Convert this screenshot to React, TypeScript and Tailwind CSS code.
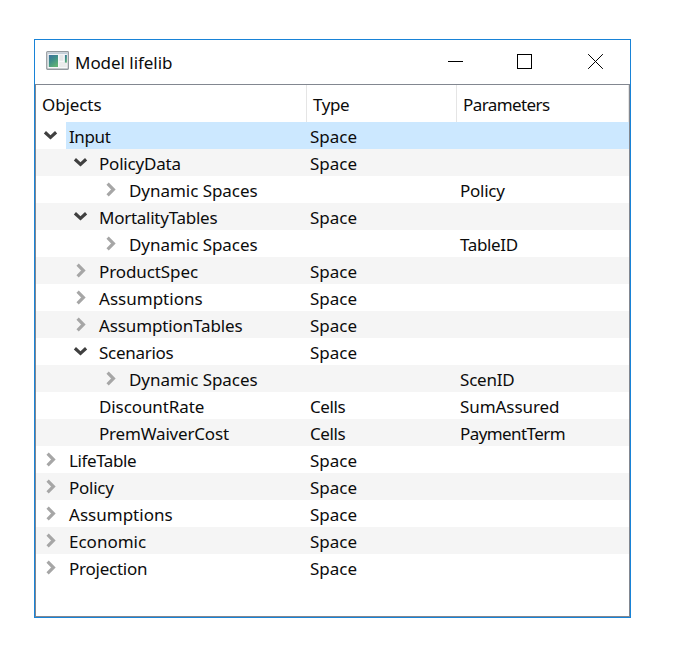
import React from "react";

type Row = {
  name: string;
  level: 0 | 1 | 2;
  state?: "open" | "closed";
  type?: string;
  params?: string;
  selected?: boolean;
};

const rows: Row[] = [
  { name: "Input", level: 0, state: "open", type: "Space", selected: true },
  { name: "PolicyData", level: 1, state: "open", type: "Space" },
  { name: "Dynamic Spaces", level: 2, state: "closed", params: "Policy" },
  { name: "MortalityTables", level: 1, state: "open", type: "Space" },
  { name: "Dynamic Spaces", level: 2, state: "closed", params: "TableID" },
  { name: "ProductSpec", level: 1, state: "closed", type: "Space" },
  { name: "Assumptions", level: 1, state: "closed", type: "Space" },
  { name: "AssumptionTables", level: 1, state: "closed", type: "Space" },
  { name: "Scenarios", level: 1, state: "open", type: "Space" },
  { name: "Dynamic Spaces", level: 2, state: "closed", params: "ScenID" },
  { name: "DiscountRate", level: 1, type: "Cells", params: "SumAssured" },
  { name: "PremWaiverCost", level: 1, type: "Cells", params: "PaymentTerm" },
  { name: "LifeTable", level: 0, state: "closed", type: "Space" },
  { name: "Policy", level: 0, state: "closed", type: "Space" },
  { name: "Assumptions", level: 0, state: "closed", type: "Space" },
  { name: "Economic", level: 0, state: "closed", type: "Space" },
  { name: "Projection", level: 0, state: "closed", type: "Space" },
];

const tracking: Record<string, string> = {
  "Model lifelib": "tracking-[-0.04px]",
  Objects: "tracking-[-0.1px]",
  Parameters: "tracking-[-0.58px]",
  PolicyData: "tracking-[-0.2px]",
  "Dynamic Spaces": "tracking-[-0.04px]",
  MortalityTables: "tracking-[-0.26px]",
  ProductSpec: "tracking-[-0.1px]",
  Assumptions: "tracking-[0.02px]",
  AssumptionTables: "tracking-[-0.12px]",
  Scenarios: "tracking-[-0.28px]",
  DiscountRate: "tracking-[-0.1px]",
  PremWaiverCost: "tracking-[-0.18px]",
  Policy: "tracking-[-0.26px]",
  Economic: "tracking-[0px]",
  Projection: "tracking-[-0.25px]",
  Space: "tracking-[0px]",
  SumAssured: "tracking-[-0.06px]",
  PaymentTerm: "tracking-[-0.58px]",
  ScenID: "tracking-[-0.2px]",
  TableID: "tracking-[-0.36px]",
};

const indent = ["w-[30px]", "w-[60px]", "w-[90px]"];

function Label({ text }: { text?: string }) {
  if (!text) return null;
  return <span className={tracking[text] ?? "tracking-[-0.4px]"}>{text}</span>;
}

function Arrow({ state }: { state?: "open" | "closed" }) {
  if (!state) return null;
  return state === "open" ? (
    <svg width="30" height="27" viewBox="0 0 30 27" fill="none" stroke="#404040" strokeWidth="3.2">
      <path d="M8.9 10.3 L14.5 15.4 L20.1 10.3" />
    </svg>
  ) : (
    <svg width="30" height="27" viewBox="0 0 30 27" fill="none" stroke="#a6a6a6" strokeWidth="3.2">
      <path d="M11.6 7.7 L17.4 13.5 L11.6 19.3" />
    </svg>
  );
}

function AppIcon() {
  return (
    <svg width="24" height="20" viewBox="0 0 24 20">
      <defs>
        <linearGradient id="pane" x1="0" y1="0" x2="0.6" y2="1">
          <stop offset="0" stopColor="#3d6f9e" />
          <stop offset="0.5" stopColor="#3f8f8a" />
          <stop offset="1" stopColor="#5fb174" />
        </linearGradient>
      </defs>
      <rect x="0.75" y="0.65" width="21.6" height="17.6" rx="0.8" fill="#f7f8f9" stroke="#949a9f" strokeWidth="1.3" />
      <rect x="1.5" y="1.3" width="20.1" height="1.8" fill="#c3ced8" />
      <rect x="2.8" y="4" width="9.2" height="12" fill="url(#pane)" />
      <rect x="13.4" y="4" width="4" height="5.8" fill="#e5e7e8" />
      <rect x="13.4" y="11" width="7.4" height="5" fill="#ebecec" />
      <rect x="18.9" y="4" width="2" height="7.6" fill="url(#pane)" />
    </svg>
  );
}

export default function App() {
  return (
    <div className="h-[672px] w-[690px] bg-white pt-[39px] pl-[34px] font-['Noto_Sans','Open_Sans',sans-serif] text-[17px] leading-[27px] whitespace-nowrap text-[#0c0c0c]">
      <div className="flex h-[579px] w-[597px] flex-col border border-[#1883d7]">
        <div className="flex h-11 shrink-0 items-center pl-[11px]">
          <div className="pb-0.5">
            <AppIcon />
          </div>
          <div className="pl-[5px]">
            <Label text="Model lifelib" />
          </div>
          <svg className="mr-px ml-auto" width="188" height="44" viewBox="0 0 188 44" fill="none" stroke="#000">
            <path d="M7 21.5 H22" />
            <rect x="76.5" y="14.5" width="14" height="14" />
            <path d="M147.5 14.5 L161.5 28.5 M161.5 14.5 L147.5 28.5" strokeLinecap="square" />
          </svg>
        </div>
        <div className="flex grow flex-col border border-[#828790]">
          <div className="flex h-[37px] shrink-0 leading-[39px]">
            <div className="w-[271px] border-r border-[#e5e5e5] pl-1.5">
              <Label text="Objects" />
            </div>
            <div className="w-[150px] border-r border-[#e5e5e5] pl-1.5">
              <Label text="Type" />
            </div>
            <div className="grow border-r border-[#e5e5e5] pl-1.5">
              <Label text="Parameters" />
            </div>
          </div>
          {rows.map((r, i) => (
            <div key={i} className={`flex h-[27px] shrink-0 ${i % 2 ? "bg-[#f5f5f5]" : ""}`}>
              <div className={`flex shrink-0 justify-end ${indent[r.level]}`}>
                <Arrow state={r.state} />
              </div>
              <div className={`flex grow leading-[29px] ${r.selected ? "bg-[#cce8ff]" : ""}`}>
                <div className="grow pl-[3px]">
                  <Label text={r.name} />
                </div>
                <div className="w-[150px] pl-[3px]">
                  <Label text={r.type} />
                </div>
                <div className="w-[172px] pl-[3px]">
                  <Label text={r.params} />
                </div>
              </div>
            </div>
          ))}
        </div>
      </div>
    </div>
  );
}
